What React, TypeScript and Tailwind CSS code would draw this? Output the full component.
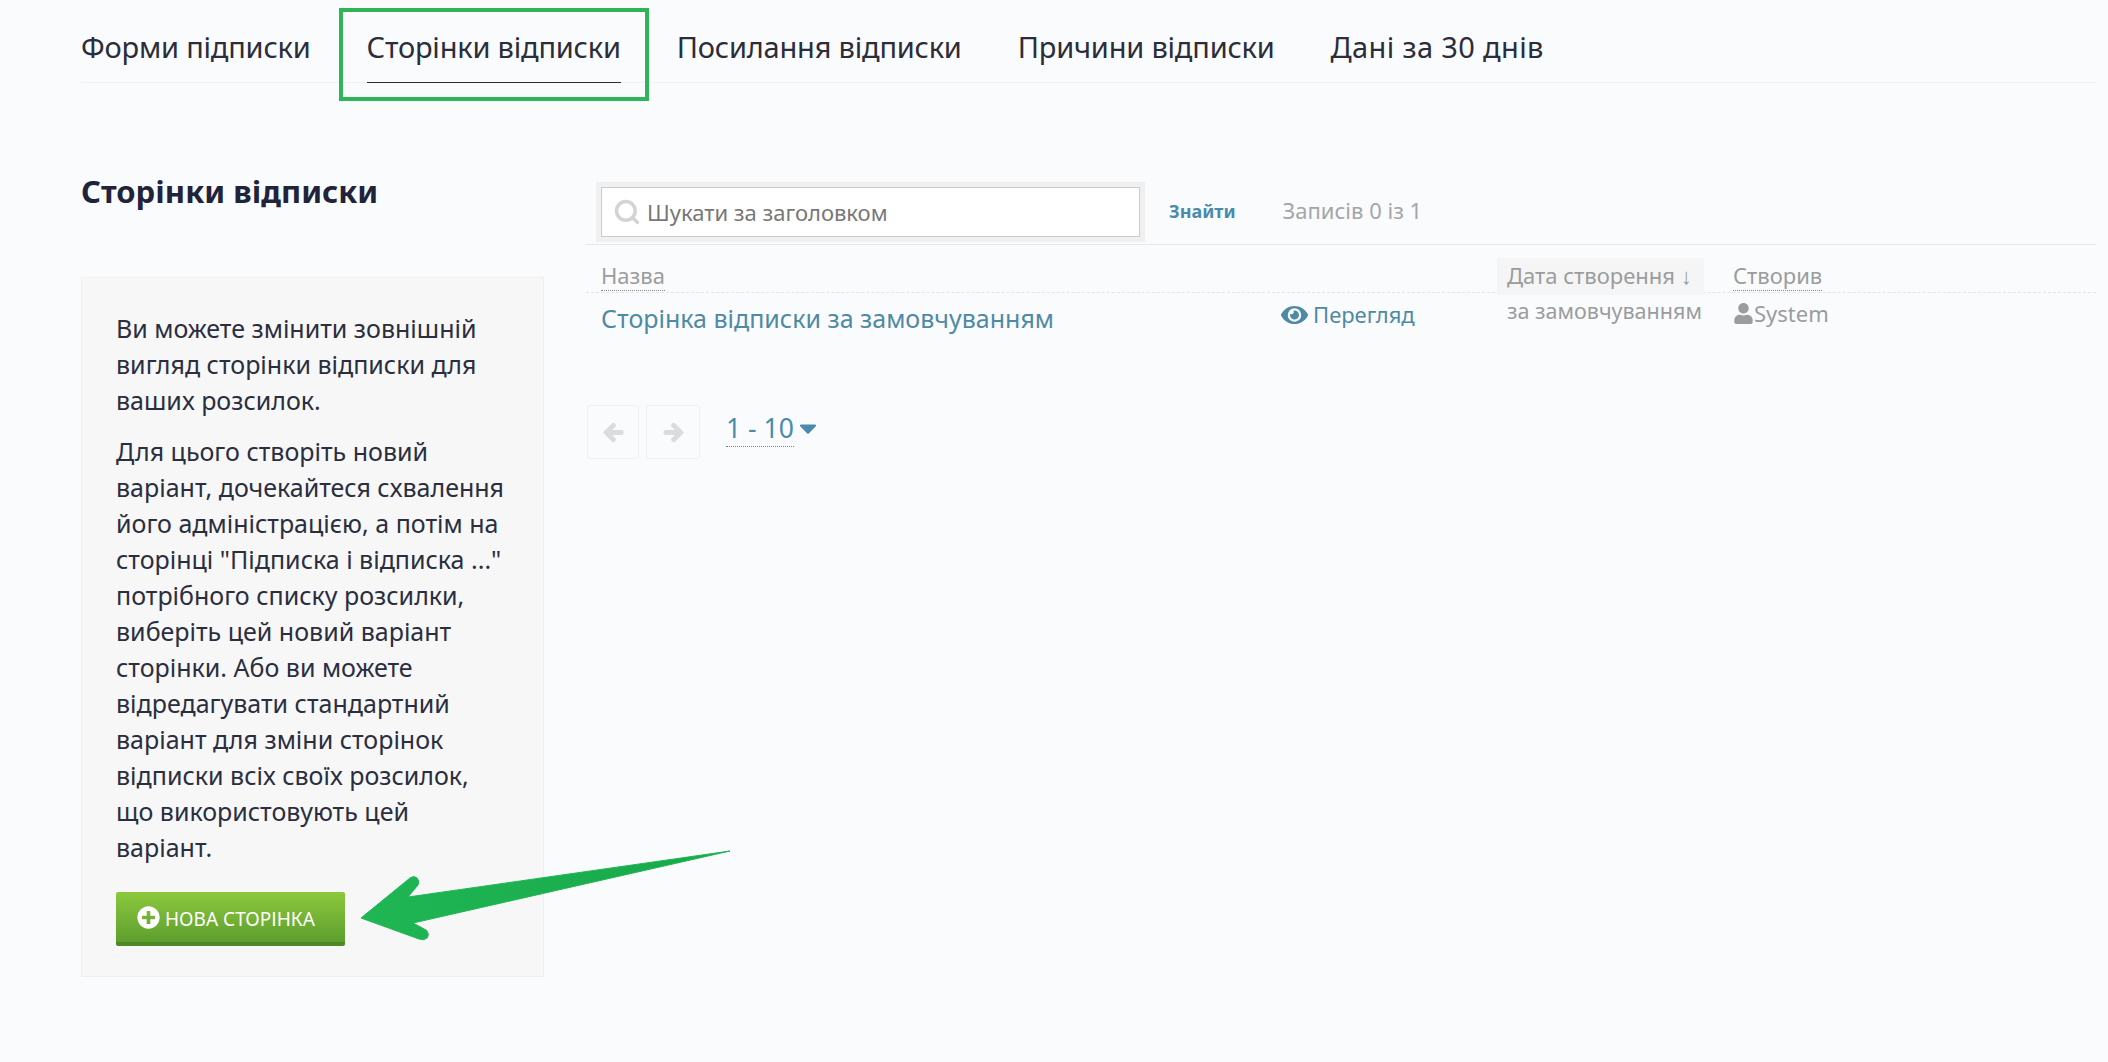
import { Search } from 'lucide-react';
import { FaArrowLeft, FaArrowRight, FaCaretDown, FaEye, FaPlusCircle, FaUser } from 'react-icons/fa';

const tabs = ['Форми підписки', 'Сторінки відписки', 'Посилання відписки', 'Причини відписки'];

const intro = ['Ви можете змінити зовнішній', 'вигляд сторінки відписки для', 'ваших розсилок.'];

const details = [
  'Для цього створіть новий',
  'варіант, дочекайтеся схвалення',
  'його адміністрацією, а потім на',
  'сторінці "Підписка і відписка ..."',
  'потрібного списку розсилки,',
  'виберіть цей новий варіант',
  'сторінки. Або ви можете',
  'відредагувати стандартний',
  'варіант для зміни сторінок',
  'відписки всіх своїх розсилок,',
  'що використовують цей',
  'варіант.',
];

export default function App() {
  return (
    <div className="relative min-h-[1062px] overflow-hidden bg-[#fafbfd] font-['Noto_Sans',sans-serif] text-[#2b2e3f]">
      {/* Tabs */}
      <div className="ml-[81px] mr-[12px] flex h-[83px] gap-[56px] border-b border-[#f0f1f3] text-[29px] tracking-[-0.2px] text-[#2b2d3a]">
        {tabs.map((tab, index) => (
          <div
            key={tab}
            className={`h-[83px] whitespace-nowrap pt-[27px] leading-[40px] ${index === 1 ? 'border-b border-[#2b2d3a]' : ''}`}
          >
            {tab}
          </div>
        ))}
        <div className="h-[83px] whitespace-nowrap pt-[27px] leading-[40px] tracking-[0.35px]">Дані за 30 днів</div>
      </div>

      <div className="ml-[81px] mr-[12px] mt-[86px] flex gap-[42px]">
        {/* Left column */}
        <div className="w-[463px] shrink-0">
          <h2 className="mb-[64px] h-[44px] text-[31px] font-bold leading-[44px] text-[#20233a]">Сторінки відписки</h2>
          <div className="h-[700px] border border-[#f0f0f0] bg-[#f7f7f7] pl-[34px] pt-[32px] text-[25px] leading-[36px]">
            <div className="mb-[15px]">
              {intro.map((line) => (
                <div key={line} className="whitespace-nowrap">{line}</div>
              ))}
            </div>
            <div>
              {details.map((line, index) => (
                <div key={index} className="whitespace-nowrap">{line}</div>
              ))}
            </div>
            <button className="mt-[27px] flex h-[54px] w-[229px] items-center gap-[5px] rounded-[2px] border-b-[4px] border-[#4c8a26] bg-gradient-to-b from-[#8cc83c] to-[#5d9f2f] pl-[21px] text-[19px] text-white">
              <FaPlusCircle className="h-[23px] w-[23px]" />
              <span className="pt-[3px]">НОВА СТОРІНКА</span>
            </button>
          </div>
        </div>

        {/* Right column */}
        <div className="flex-1 pt-[13px]">
          <div className="flex h-[63px] items-start border-b border-[#e6e8ea] pb-[3px]">
            <div className="ml-[10px] w-[549px] bg-[#f0f0f0] p-[5px]">
              <div className="flex h-[50px] items-center gap-[6px] border border-[#cccccc] bg-white pl-[11px] text-[22px] text-[#777777]">
                <Search className="h-[28px] w-[28px] text-[#d4d4d4]" strokeWidth={3} />
                Шукати за заголовком
              </div>
            </div>
            <span className="ml-[24px] mt-[16px] text-[18px] font-bold text-[#4a8bad]">Знайти</span>
            <span className="ml-[47px] mt-[12px] text-[22px] text-[#a3a6a8]">Записів 0 із 1</span>
          </div>

          {/* Table header */}
          <div className="grid h-[48px] grid-cols-[697px_214px_207px_1fr] border-b border-dashed border-[#e2e4e6] text-[22px] text-[#9a9c9e]">
            <div className="pl-[15px] pt-[14px]">
              <span className="border-b border-dotted border-[#8a8a8a]">Назва</span>
            </div>
            <div />
            <div className="mb-[-3px] mt-[13px] flex bg-[#f5f5f5] pl-[10px] pt-[1px]">Дата створення ↓</div>
            <div className="pl-[29px] pt-[14px]">
              <span className="border-b border-dotted border-[#8a8a8a]">Створив</span>
            </div>
          </div>

          {/* Row */}
          <div className="grid grid-cols-[697px_214px_207px_1fr] pt-[7px]">
            <a className="pl-[15px] text-[25px] leading-[36px] text-[#4f8aa5]">Сторінка відписки за замовчуванням</a>
            <a className="-ml-[2px] flex h-[29px] items-center gap-[5px] text-[22px] text-[#4f8aa5]">
              <FaEye className="h-[24px] w-[27px]" />
              Перегляд
            </a>
            <div className="-mt-[4px] whitespace-nowrap pl-[10px] text-[21.5px] leading-[30px] text-[#9a9c9e]">за замовчуванням</div>
            <div className="flex h-[26px] items-center pl-[29px] text-[22px] text-[#9a9c9e]">
              <FaUser className="h-[21px] w-[21px]" />
              System
            </div>
          </div>

          {/* Pagination */}
          <div className="ml-[1px] mt-[69px] flex items-center gap-[7px]">
            <div className="flex h-[54px] w-[52px] items-center justify-center rounded-[3px] border border-[#f0f1f3] text-[#dcdcdc]">
              <FaArrowLeft className="h-[21px] w-[21px]" stroke="currentColor" strokeWidth={40} />
            </div>
            <div className="flex h-[54px] w-[54px] items-center justify-center rounded-[3px] border border-[#f0f1f3] text-[#dcdcdc]">
              <FaArrowRight className="h-[21px] w-[21px]" stroke="currentColor" strokeWidth={40} />
            </div>
            <div className="mb-[8px] ml-[19px] flex items-center gap-[5px] text-[26.5px] text-[#4a8bad]">
              <span className="border-b border-dotted border-[#6a8a9a] leading-[36px]">1 - 10</span>
              <FaCaretDown className="h-[28px] w-[18px]" />
            </div>
          </div>
        </div>
      </div>

      {/* Annotation: highlight box */}
      <div className="absolute left-[339px] top-[8px] h-[93px] w-[310px] border-[4px] border-[#2fb457]" />

      {/* Annotation: arrow */}
      <svg className="absolute left-[355px] top-[845px]" width="380" height="100" viewBox="355 845 380 100">
        <defs>
          <linearGradient id="arrowFill" x1="0" y1="0" x2="1" y2="0">
            <stop offset="0" stopColor="#20b654" />
            <stop offset="1" stopColor="#17a84a" />
          </linearGradient>
        </defs>
        <path
          d="M361 918 L410 878 Q414 875 417 878 Q420 881 418 885 L408 897 L730 851 L413 923 L426 930 Q430 934 427 938 Q424 941 419 939 Z"
          fill="url(#arrowFill)"
          stroke="#20b654"
          strokeWidth="1"
          strokeLinejoin="round"
        />
      </svg>
    </div>
  );
}
